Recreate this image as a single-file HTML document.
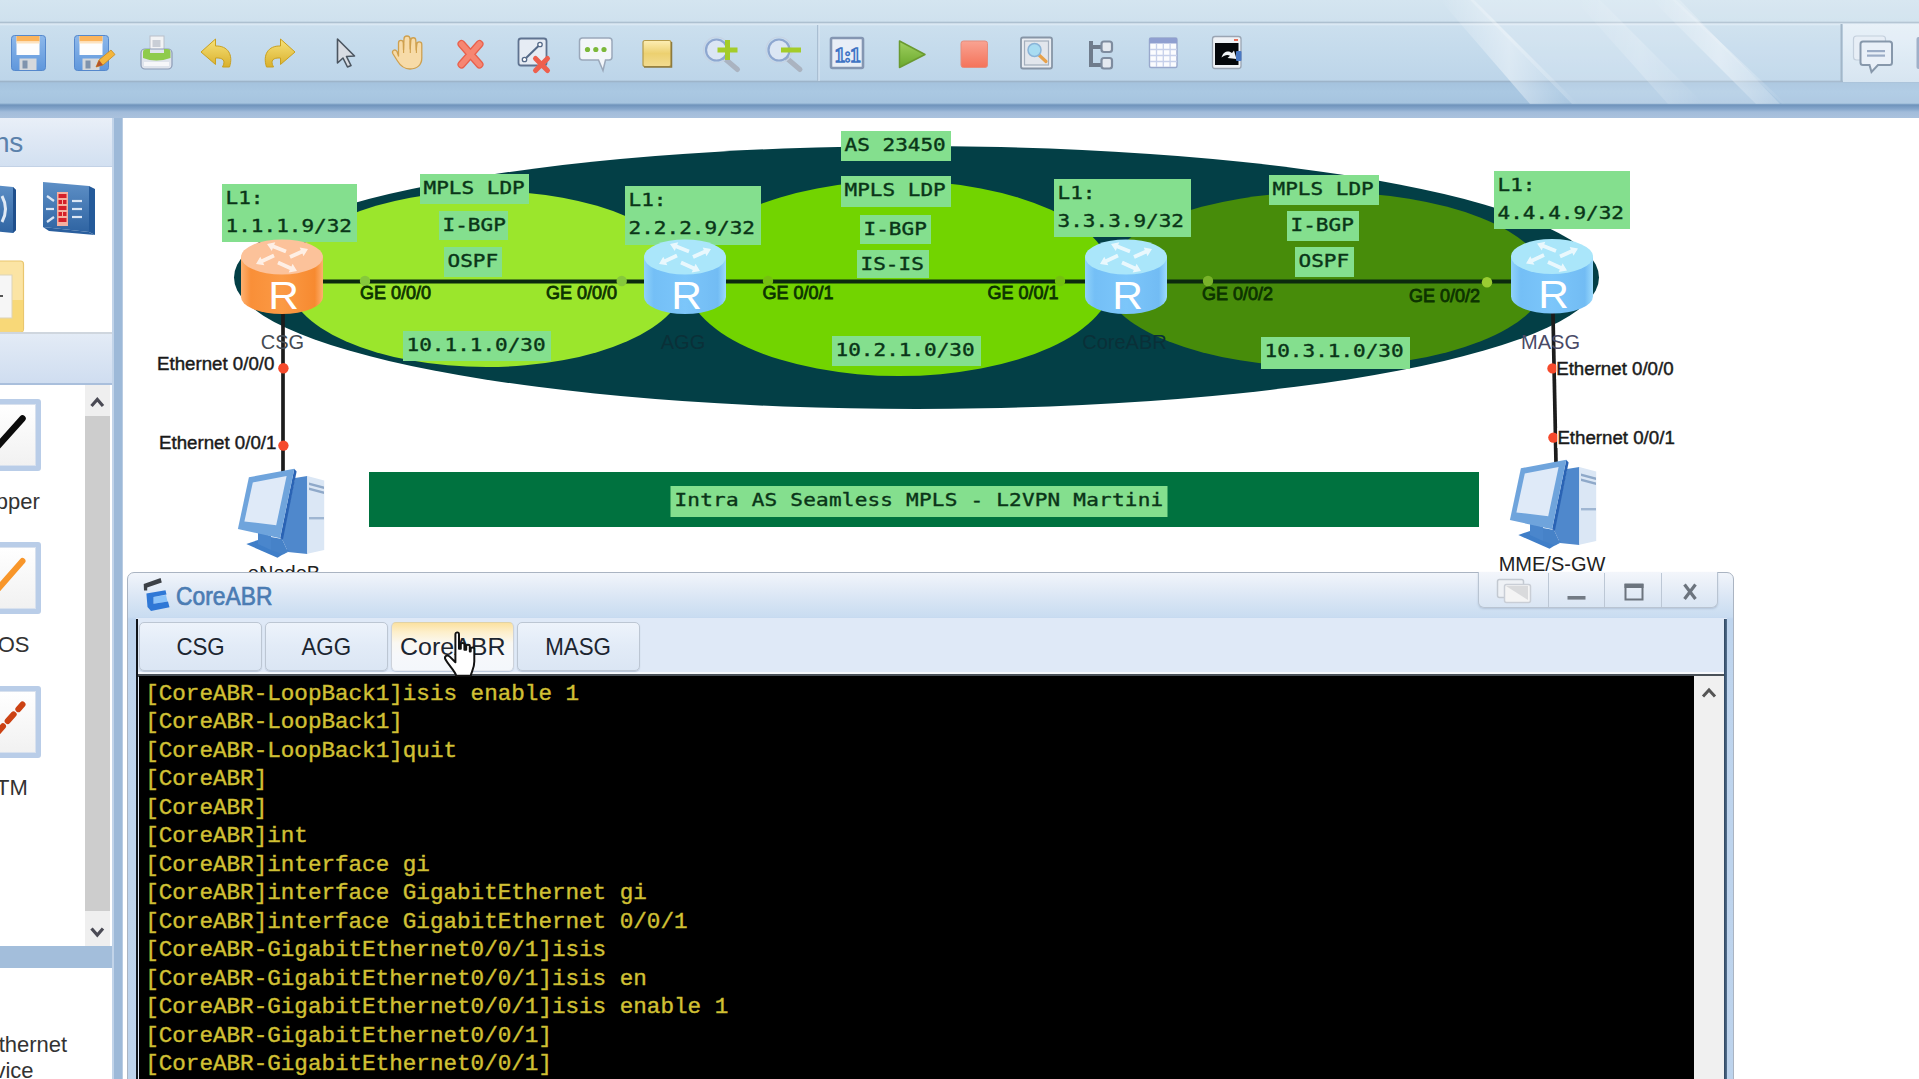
<!DOCTYPE html>
<html>
<head>
<meta charset="utf-8">
<title>eNSP</title>
<style>
html,body{margin:0;padding:0;}
body{width:1919px;height:1079px;overflow:hidden;position:relative;background:#fff;font-family:"Liberation Sans",sans-serif;}
.abs{position:absolute;}
#topbg{left:0;top:0;width:1919px;height:118px;background:linear-gradient(to bottom,#d4e5f0 0px,#cfe1ee 21px,#adc0d0 22.5px,#e0ecf5 24px,#cbdfee 26px,#c2d9eb 60px,#bdd5e9 80px,#9db4c9 81.5px,#a5c3de 83px,#aac8e2 92px,#a6c4df 103px,#6f93bb 105px,#86a7cc 109px,#a2bcda 112px,#a9c1dd 117px,#a9c1dd 118px);}
#topright{left:1843px;top:24px;width:76px;height:58px;background:linear-gradient(to bottom,#e6f0f8,#d3e3f0);}
#leftpanel{left:0;top:118px;width:112px;height:961px;background:#fff;}
#leftsep{left:112px;top:118px;width:11px;height:961px;background:linear-gradient(to right,#c2d4e9 0px,#c2d4e9 2px,#9db9d8 2px,#9db9d8 10px,#b9cce2 10px);}

.tab{top:622px;height:49px;box-sizing:border-box;border:1px solid #bcc6d3;border-radius:5px;background:linear-gradient(to bottom,#edf3fb,#e2ebf7 50%,#dbe6f4);font-size:24.5px;line-height:48px;text-align:center;color:#1c2530;box-shadow:0 1px 1px rgba(150,165,190,.5);}
.tab.act{background:linear-gradient(to bottom,#fbe1a0 0px,#fdefcb 9px,#faf8f2 20px,#f6f8fb 32px,#f4f7fb);border-color:#e0d2a6 #cdd2da #e6e9ee #cdd2da;}
.tab span{display:inline-block;transform:scaleX(0.91);}
.tab.act span{transform:scaleX(1.02);}
#tt{left:145.2px;top:679.5px;margin:0;font-family:"Liberation Mono",monospace;font-size:22.6px;line-height:28.52px;color:#d4c436;-webkit-text-stroke:0.45px #c4b42e;}

.ibox{left:-10px;width:50.500px;height:72px;box-sizing:border-box;border:5px solid #b9cde8;border-radius:3px;background:linear-gradient(to bottom,#ffffff,#f1f1f1);box-shadow:inset 0 0 0 1px #d8e1ee;}
.ltxt{font-size:22px;line-height:26px;color:#333;white-space:nowrap;}
</style>
</head>
<body>
<div id="topbg" class="abs"></div>
<div id="topright" class="abs"></div>
<div id="leftpanel" class="abs"></div>
<div id="leftsep" class="abs"></div>
<!--TOOLBAR_START-->
<svg class="abs" style="left:0;top:0" width="1919" height="118" viewBox="0 0 1919 118">
<defs>
<linearGradient id="tg_save" x1="0" y1="0" x2="0" y2="1"><stop offset="0" stop-color="#8db8ea"/><stop offset="1" stop-color="#5f97dc"/></linearGradient>
<linearGradient id="tg_yel" x1="0" y1="0" x2="0" y2="1"><stop offset="0" stop-color="#f7e27a"/><stop offset="1" stop-color="#d9b02c"/></linearGradient>
<linearGradient id="tg_rect" x1="0" y1="0" x2="0" y2="1"><stop offset="0" stop-color="#fdeeb4"/><stop offset="0.5" stop-color="#ecd070"/><stop offset="1" stop-color="#f3dc90"/></linearGradient>
<linearGradient id="tg_stop" x1="0" y1="0" x2="0" y2="1"><stop offset="0" stop-color="#f9a392"/><stop offset="1" stop-color="#f4735a"/></linearGradient>
<linearGradient id="tg_play" x1="0" y1="0" x2="0" y2="1"><stop offset="0" stop-color="#9fd060"/><stop offset="1" stop-color="#6aa82c"/></linearGradient>
<linearGradient id="streak" x1="0" y1="0" x2="1" y2="0"><stop offset="0" stop-color="#fff" stop-opacity="0"/><stop offset="0.5" stop-color="#fff" stop-opacity="0.45"/><stop offset="1" stop-color="#fff" stop-opacity="0"/></linearGradient>
<g id="floppy">
<rect x="0" y="0" width="34" height="35" rx="3" fill="url(#tg_save)" stroke="#5588cc" stroke-width="1"/>
<rect x="5" y="0.5" width="23" height="19" fill="#fdfdfd"/>
<rect x="5" y="0.5" width="23" height="5.5" fill="#fbb45c"/>
<rect x="5" y="6" width="23" height="2" fill="#fde3c0"/>
<rect x="8" y="23" width="17" height="11.5" fill="#d5d8dc"/>
<rect x="11" y="25" width="5" height="8" fill="#7f93ad"/>
</g>
</defs>
<!-- glossy streaks -->
<polygon points="1470,0 1680,0 1780,104 1572,104" fill="#fff" opacity="0.2"/>
<polygon points="1672,0 1919,0 1919,104 1782,104" fill="#fff" opacity="0.1"/>
<polygon points="1440,0 1474,0 1578,104 1530,104" fill="url(#streak)" opacity="0.95"/>
<polygon points="1575,0 1600,0 1704,104 1668,104" fill="url(#streak)" opacity="0.45"/>
<polygon points="1652,0 1676,0 1786,104 1756,104" fill="url(#streak)" opacity="0.85"/>
<!-- save -->
<use href="#floppy" x="11.5" y="35.5"/>
<!-- save as -->
<use href="#floppy" x="74.5" y="35.5"/>
<path d="M96 67 L99 60 L111 50 L115 54.5 L103 65 Z" fill="#f4b63c" stroke="#c98a20" stroke-width="0.8"/>
<path d="M96 67 L99 60 L103 65 Z" fill="#b5532a"/>
<!-- print -->
<rect x="150" y="36" width="14" height="17" fill="#f2f3f5" stroke="#b9c0ca" stroke-width="1"/>
<rect x="152.500" y="40" width="8" height="7" fill="#c9ced6"/>
<rect x="141" y="49" width="31" height="20" rx="4" fill="#dfe4ec" stroke="#8c9bb5" stroke-width="1.2"/>
<path d="M143 52 Q143 49 147 49 L150 49 L150 53 L164 53 L164 49 L167 49 Q170.500 49 170.500 52 L170.500 58 Q156 63 143 58 Z" fill="#8fcb4b"/>
<rect x="144" y="62" width="25" height="4" fill="#f6f7f9"/>
<!-- undo -->
<path d="M201 52 L215.5 39 L215.5 46 C228 45.5 233.5 55 229.5 67 L222.5 67 C226 60.5 223 57.5 215.5 58 L215.5 64.5 Z" fill="url(#tg_yel)" stroke="#c9a020" stroke-width="1"/>
<!-- redo -->
<path d="M295 52 L280.5 39 L280.5 46 C268 45.5 262.5 55 266.5 67 L273.5 67 C270 60.5 273 57.5 280.5 58 L280.5 64.5 Z" fill="url(#tg_yel)" stroke="#c9a020" stroke-width="1"/>
<!-- pointer -->
<path d="M337.500 39 L337.500 63 L343 58 L347.500 67 L351 65.500 L346.500 56.500 L354.500 56 Z" fill="#d9dde3" stroke="#4b5560" stroke-width="1.6" stroke-linejoin="round"/>
<!-- hand -->
<path d="M398.5 56 L398.5 43 C398.5 39.5 403.3 39.5 403.3 43 L403.5 50 L404 39 C404 35 410 35 410 39 L410.2 49 L410.8 40.5 C410.8 36.8 415.8 36.8 415.8 40.5 L416.2 50 L416.8 44.5 C416.8 41 421.8 41 421.8 44.5 L421.8 58 C421.8 65 417 69 410 69 C403.5 69 400.5 66 397.5 61 L392.8 53.5 C391.5 50.5 395 48.5 397 51.5 Z" fill="#f7dba8" stroke="#cfa04e" stroke-width="1.3" stroke-linejoin="round"/>
<path d="M403.6 44 L403.6 53 M410.3 41 L410.3 53 M416.4 43 L416.4 53" stroke="#cfa04e" stroke-width="1.1" fill="none"/>
<!-- red x -->
<path d="M461.500 44 L479.500 64.500 M479.500 44 L461.500 64.500" stroke="#e8604c" stroke-width="8" stroke-linecap="round"/><path d="M461.500 44 L479.500 64.500 M479.500 44 L461.500 64.500" stroke="#f68672" stroke-width="5.5" stroke-linecap="round"/>
<!-- link delete -->
<rect x="518.500" y="38.500" width="28" height="27" rx="2.500" fill="#e6ecf4" stroke="#5f7390" stroke-width="1.8"/>
<path d="M524.500 59.500 L540 44.500" stroke="#556a88" stroke-width="2"/>
<circle cx="524.500" cy="59.500" r="2.200" fill="#fff" stroke="#556a88" stroke-width="1.300"/>
<circle cx="540" cy="44.500" r="2.200" fill="#fff" stroke="#556a88" stroke-width="1.300"/>
<path d="M535.500 58.500 L547.500 70.500 M547.500 58.500 L535.500 70.500" stroke="#ee5f4c" stroke-width="5" stroke-linecap="round"/>
<!-- bubble -->
<path d="M582.500 38 L609 38 Q612 38 612 41 L612 57 Q612 60 609 60 L605.500 60 L603 70.500 L598.500 60 L582.500 60 Q579.500 60 579.500 57 L579.500 41 Q579.500 38 582.500 38 Z" fill="#f3f6fa" stroke="#9aa8ba" stroke-width="1.5"/>
<circle cx="587.500" cy="49.500" r="2.600" fill="#7cb83a"/><circle cx="595.800" cy="49.500" r="2.600" fill="#7cb83a"/><circle cx="604" cy="49.500" r="2.600" fill="#7cb83a"/>
<!-- rect -->
<rect x="643" y="40.500" width="28" height="26" rx="2" fill="url(#tg_rect)" stroke="#b59a48" stroke-width="1.2"/>
<path d="M644 67 L671.500 67 L671.500 42" fill="none" stroke="#8d7a3c" stroke-width="1.5"/>
<!-- zoom in -->
<path d="M724 58 L737.500 69.500" stroke="#aab3c0" stroke-width="5" stroke-linecap="round"/>
<circle cx="716.500" cy="50" r="10.500" fill="#dbe6f4" stroke="#8ea7d0" stroke-width="2.200"/>
<circle cx="716.500" cy="50" r="13" fill="none" stroke="#c6d3e4" stroke-width="1.200"/>
<path d="M717.500 50 L737.500 50 M727.500 40 L727.500 60" stroke="#a4cc2a" stroke-width="5"/>
<!-- zoom out -->
<path d="M786.500 58 L800 69.500" stroke="#aab3c0" stroke-width="5" stroke-linecap="round"/>
<circle cx="779" cy="50" r="10.500" fill="#dbe6f4" stroke="#8ea7d0" stroke-width="2.200"/>
<circle cx="779" cy="50" r="13" fill="none" stroke="#c6d3e4" stroke-width="1.200"/>
<path d="M781 50 L801 50" stroke="#a4cc2a" stroke-width="5"/>
<!-- separator -->
<rect x="817" y="25" width="1.500" height="56" fill="#a9bed2"/>
<rect x="818.500" y="25" width="1" height="56" fill="#dbe8f3"/>
<!-- 1:1 -->
<rect x="831" y="38" width="32" height="30" rx="1.500" fill="#e8eef7" stroke="#8496b2" stroke-width="2.600"/>
<text x="847" y="62" font-family="Liberation Serif,serif" font-weight="bold" font-size="22" fill="#d2e4f8" stroke="#3f73c4" stroke-width="1.500" text-anchor="middle" letter-spacing="-1.5">1:1</text>
<!-- play -->
<path d="M899.500 41 L925 54.500 L899.500 67.500 Z" fill="url(#tg_play)" stroke="#6a9a30" stroke-width="1.500" stroke-linejoin="round"/>
<!-- stop -->
<rect x="961" y="41" width="26.500" height="26.500" rx="2.500" fill="url(#tg_stop)" stroke="#e58c7c" stroke-width="1"/>
<!-- capture -->
<rect x="1021" y="37.500" width="31" height="31" rx="2" fill="#e9edf2" stroke="#8795a6" stroke-width="1.800"/>
<rect x="1024.500" y="41" width="24" height="24" fill="#e2e6ec" stroke="#a4afbd" stroke-width="1.200"/>
<path d="M1039 55 L1046 61.500" stroke="#e7a14a" stroke-width="3.200" stroke-linecap="round"/>
<circle cx="1034.500" cy="50" r="6.500" fill="#a8dcf2" stroke="#8ab4d8" stroke-width="1.500"/>
<!-- tree -->
<path d="M1091 41 L1091 65 L1101 65 M1091 47 L1101 47" fill="none" stroke="#6f7c8c" stroke-width="4"/>
<rect x="1101.500" y="41.500" width="10.500" height="10.500" rx="2.500" fill="#e4e9f0" stroke="#7e8c9f" stroke-width="2.200"/>
<rect x="1101.500" y="58" width="10.500" height="10.500" rx="2.500" fill="#e4e9f0" stroke="#7e8c9f" stroke-width="2.200"/>
<!-- table -->
<rect x="1149.500" y="38" width="27.500" height="29.500" rx="1.500" fill="#fbfcfe" stroke="#99a9cc" stroke-width="1.400"/>
<rect x="1149.500" y="38" width="27.500" height="5.500" fill="#8f9fd0"/>
<path d="M1156.500 43.500 V67 M1163.300 43.500 V67 M1170.100 43.500 V67 M1150 49.500 H1177 M1150 55.500 H1177 M1150 61.500 H1177" stroke="#c6d0ea" stroke-width="1.300"/>
<!-- console -->
<rect x="1212.500" y="36.500" width="28.500" height="32" rx="2.500" fill="#eef1f5" stroke="#9aa5b3" stroke-width="1.300"/>
<rect x="1215" y="43" width="23.500" height="22" fill="#05070a"/>
<rect x="1234" y="39" width="4" height="2" fill="#e9705a"/>
<path d="M1221.500 57.500 C1223 51 1229 50 1232 53 L1234 50.500 L1236.500 59 L1227.500 58 L1230 55.800 C1227.500 54 1224.500 55 1221.500 57.500 Z" fill="#f2f4f7"/>
<rect x="1236" y="51" width="5.500" height="10" rx="1" fill="#4a78c2"/>
<!-- right separator + chat -->
<rect x="1840.500" y="24" width="2" height="58" fill="#a2b6c8"/>
<rect x="1853.500" y="36" width="32" height="24" rx="3" fill="#e7eef6" stroke="#c3cfdc" stroke-width="1.200"/>
<path d="M1863 41.500 L1889.500 41.500 Q1892 41.500 1892 44 L1892 62.500 Q1892 65 1889.500 65 L1878 65 L1871.500 72 L1869.500 65 L1863 65 Q1860.500 65 1860.500 62.500 L1860.500 44 Q1860.500 41.500 1863 41.500 Z" fill="#e9f0f8" stroke="#8798ab" stroke-width="2"/>
<rect x="1867" y="50" width="18" height="2.200" fill="#9bacc6"/><rect x="1867" y="54.500" width="18" height="2.200" fill="#9bacc6"/>
<rect x="1916.500" y="37" width="6" height="32" rx="2" fill="#9fb0c8"/>
</svg>

<!--TOOLBAR_END-->
<!--LEFT_START-->
<div class="abs" style="left:0;top:118px;width:112px;height:49px;background:linear-gradient(to bottom,#e9eff8,#dde7f4 50%,#d2e0f1);"></div>
<div class="abs" style="left:0;top:166px;width:112px;height:1px;background:#c3d2e6;"></div>
<div class="abs" style="left:-21px;top:127px;font-size:28px;line-height:32px;color:#5b81ab;letter-spacing:-0.5px;">ons</div>
<svg class="abs" style="left:0;top:170px" width="112" height="166" viewBox="0 170 112 166">
<defs><linearGradient id="lg_b" x1="0" y1="0" x2="0" y2="1"><stop offset="0" stop-color="#5d8fc6"/><stop offset="1" stop-color="#2f64a2"/></linearGradient></defs>
<!-- partial icon -->
<path d="M-20 184 L13 187 L16 190 L16 230 L13 233 L-20 230 Z" fill="url(#lg_b)"/>
<path d="M13 187 L16 190 L16 230 L13 233 Z" fill="#1f4f8c"/>
<path d="M2 196 Q9 209 2 222" fill="none" stroke="#dfe9f5" stroke-width="3"/>
<!-- firewall icon -->
<path d="M43 182 L89 186 L89 232 L43 227 Z" fill="url(#lg_b)"/>
<path d="M89 186 L95 189 L95 235 L89 232 Z" fill="#245a9a"/>
<path d="M43 227 L89 232 L95 235 L49 231 Z" fill="#2a5f9e"/>
<rect x="57" y="192" width="11" height="34" fill="#f4b0a0"/>
<g fill="#d5202a"><rect x="58.500" y="194" width="8" height="4"/><rect x="58.500" y="200" width="3.500" height="4"/><rect x="63" y="200" width="3.500" height="4"/><rect x="58.500" y="206" width="8" height="4"/><rect x="58.500" y="212" width="3.500" height="4"/><rect x="63" y="212" width="3.500" height="4"/><rect x="58.500" y="218" width="8" height="4"/></g>
<g stroke="#dbe6f4" stroke-width="2.200" fill="none"><path d="M47 196 L54 201"/><path d="M46 209 L54 209"/><path d="M47 222 L54 217"/><path d="M72 201 L82 201"/><path d="M72 209 L82 209"/><path d="M72 217 L82 217"/></g>
<!-- selected yellow -->
<rect x="-10" y="261" width="33.500" height="71" rx="3" fill="#fbe4a4" stroke="#e9c66e" stroke-width="1.200"/>
<rect x="-10" y="300" width="33" height="31.500" fill="#f8d878"/>
<rect x="-10" y="275" width="22" height="43" fill="#f6f6f6" stroke="#dcd3b8" stroke-width="1"/>
<rect x="0" y="295" width="3" height="2" fill="#555"/>
</svg>
<div class="abs" style="left:0;top:332px;width:112px;height:2px;background:#cfd6de;"></div>
<div class="abs" style="left:0;top:334px;width:112px;height:50px;background:linear-gradient(to bottom,#e3ebf6,#d9e4f3 50%,#cfddf0);"></div>
<div class="abs" style="left:0;top:383px;width:112px;height:2px;background:#a9bfdc;"></div>
<div class="abs" style="left:-6px;top:345px;font-size:20px;color:#5b81ab;">:</div>
<!-- scrollbar -->
<div class="abs" style="left:85px;top:385px;width:25px;height:561px;background:#efefef;"></div>
<div class="abs" style="left:85px;top:416px;width:25px;height:494.500px;background:#cdcdcd;"></div>
<svg class="abs" style="left:85px;top:392px" width="25" height="20" viewBox="0 0 25 20"><path d="M6.500 14 L12.300 7.500 L18 14" fill="none" stroke="#4b4b55" stroke-width="3.200"/></svg>
<svg class="abs" style="left:85px;top:922px" width="25" height="20" viewBox="0 0 25 20"><path d="M6.500 6.500 L12.300 13 L18 6.500" fill="none" stroke="#4b4b55" stroke-width="3.200"/></svg>
<!-- icon boxes -->
<div class="ibox abs" style="top:399px;"></div>
<div class="ibox abs" style="top:542px;"></div>
<div class="ibox abs" style="top:686px;"></div>
<svg class="abs" style="left:0;top:399px" width="42" height="360" viewBox="0 399 42 360">
<path d="M-3 447 L22.500 418.500" stroke="#0c0c0c" stroke-width="6.500" stroke-linecap="round"/>
<path d="M-3 590 L22.500 561" stroke="#f8962a" stroke-width="6" stroke-linecap="round"/>
<path d="M-3 733 L22.500 704.500" stroke="#cc4214" stroke-width="6" stroke-linecap="round" stroke-dasharray="9 7"/>
</svg>
<div class="abs ltxt" style="left:-16.500px;top:489px;">opper</div>
<div class="abs ltxt" style="left:-17px;top:632px;">POS</div>
<div class="abs ltxt" style="left:-17px;top:775px;">ATM</div>
<!-- bottom -->
<div class="abs" style="left:0;top:946px;width:112px;height:22px;background:#a3bedb;"></div>
<div class="abs ltxt" style="left:-16px;top:1032px;">Ethernet</div>
<div class="abs ltxt" style="left:-30px;top:1058px;">device</div>

<!--LEFT_END-->
<!--DIAGRAM_START-->
<svg class="abs" style="left:0;top:0" width="1919" height="1079" viewBox="0 0 1919 1079">
<defs>
<linearGradient id="gb" x1="0" x2="1" y1="0" y2="0"><stop offset="0" stop-color="#8fd2fa"/><stop offset="0.12" stop-color="#74bff6"/><stop offset="0.5" stop-color="#7cc6fa"/><stop offset="0.9" stop-color="#72bcf4"/><stop offset="1" stop-color="#9bdafc"/></linearGradient>
<linearGradient id="go" x1="0" x2="1" y1="0" y2="0"><stop offset="0" stop-color="#fdb070"/><stop offset="0.12" stop-color="#f98f38"/><stop offset="0.5" stop-color="#fb9a45"/><stop offset="0.9" stop-color="#f78a30"/><stop offset="1" stop-color="#fdb070"/></linearGradient>
<g id="arrows" fill="#ffffff" opacity="0.75">
<polygon points="46.7,10.7 34.2,5.8 35.3,3.2 27.0,5.0 31.8,12.0 32.8,9.3 45.3,14.3"/>
<polygon points="50.8,19.7 62.4,14.6 63.5,17.2 68.0,10.0 59.7,8.5 60.8,11.1 49.2,16.3"/>
<polygon points="33.2,14.8 21.5,20.3 20.3,17.7 16.0,25.0 24.4,26.3 23.1,23.7 34.8,18.2"/>
<polygon points="37.2,25.2 49.8,30.9 48.7,33.5 57.0,32.0 52.6,24.8 51.4,27.4 38.8,21.8"/>
</g>
<g id="rblue">
<path d="M1 18 L1 58 A41 17 0 0 0 83 58 L83 18 Z" fill="url(#gb)"/>
<ellipse cx="42" cy="18" rx="41" ry="17.5" fill="#aae6fa"/>
<use href="#arrows"/>
<text transform="translate(43.5,69.7) scale(1.12,1)" font-family="Liberation Sans,sans-serif" font-size="38" fill="#fff" text-anchor="middle">R</text>
</g>
<g id="rorange">
<path d="M1 18 L1 58 A41 17 0 0 0 83 58 L83 18 Z" fill="url(#go)"/>
<ellipse cx="42" cy="18" rx="41" ry="17.5" fill="#fcc29a"/>
<use href="#arrows"/>
<text transform="translate(43.5,69.7) scale(1.12,1)" font-family="Liberation Sans,sans-serif" font-size="38" fill="#fff" text-anchor="middle">R</text>
</g>
<g id="pc">
<polygon points="59,12 71.3,10 71.3,88 52,86 46,73" fill="#4f88cc"/>
<polygon points="71.3,10 88.2,14.5 88.2,84 71.3,87.8" fill="#dbe7f5"/>
<rect x="73" y="16.5" width="15" height="2.4" fill="#8fa9c9" transform="skewY(15) translate(0,-19.5)"/>
<rect x="73" y="21.5" width="15" height="2.4" fill="#8fa9c9" transform="skewY(15) translate(0,-19.5)"/>
<rect x="73" y="51" width="15" height="2.4" fill="#9fb6d2"/>
<polygon points="10.3,78 22,74 53,84.6 41.5,91.7" fill="#3f7ec8"/>
<polygon points="22,66 35,70 35,84 22,78" fill="#4a86cc"/>
<polygon points="35,71 46,73 52,86 47,88.5 35,84" fill="#4682c8"/>
<polygon points="58.3,2.8 60.6,5.4 46.9,73.8 44.1,72.2" fill="#2a63b4"/>
<polygon points="12.9,11.2 58.3,2.8 44.1,72.2 1.9,63.1" fill="#6fa4dc"/>
<polygon points="16.8,16.4 50.6,10 40.2,59.3 8.4,55.4" fill="#dfeaf8"/>
</g>
</defs>
<ellipse cx="916.5" cy="277.5" rx="682.5" ry="131.5" fill="#033f46"/>
<ellipse cx="486.5" cy="279" rx="199" ry="88" fill="#9be62c"/>
<ellipse cx="1324.5" cy="279.5" rx="221" ry="87.5" fill="#478c0a"/>
<ellipse cx="899" cy="278.5" rx="214" ry="97.5" fill="#72d400"/>
<rect x="369" y="472" width="1110" height="55" fill="#00723f"/>
<g stroke="#0b2a0e" stroke-width="4"><line x1="320" y1="281.5" x2="646" y2="281.5"/><line x1="724" y1="281.5" x2="1086" y2="281.5"/><line x1="1165" y1="281.5" x2="1512" y2="281.5"/></g>
<g stroke="#1c1c1c" stroke-width="3.7"><line x1="283" y1="310" x2="283" y2="472"/><line x1="1552.9" y1="310" x2="1556" y2="463"/></g>
<circle cx="365" cy="281" r="5.2" fill="#86c83c"/>
<circle cx="621.7" cy="281" r="5.2" fill="#86c83c"/>
<circle cx="768" cy="281" r="5.2" fill="#74c010"/>
<circle cx="1060" cy="281" r="5.2" fill="#74c010"/>
<circle cx="1208" cy="281" r="5.2" fill="#79b32a"/>
<circle cx="1487" cy="282.3" r="5.2" fill="#9acd32"/>
<rect x="222" y="184" width="135" height="58" fill="#84df8e"/>
<rect x="420" y="174" width="109" height="30" fill="#84df8e"/>
<rect x="439" y="211" width="69" height="29" fill="#84df8e"/>
<rect x="444" y="247" width="58" height="30" fill="#84df8e"/>
<rect x="403" y="331" width="148" height="30" fill="#84df8e"/>
<rect x="625" y="186" width="136" height="59" fill="#84df8e"/>
<rect x="841" y="131" width="110" height="30" fill="#84df8e"/>
<rect x="841" y="176" width="110" height="31" fill="#84df8e"/>
<rect x="860" y="215" width="71" height="29" fill="#84df8e"/>
<rect x="857" y="250" width="72" height="28" fill="#84df8e"/>
<rect x="832" y="336" width="149" height="30" fill="#84df8e"/>
<rect x="1054" y="179" width="137" height="58" fill="#84df8e"/>
<rect x="1269" y="175" width="110" height="30" fill="#84df8e"/>
<rect x="1287" y="211" width="72" height="30" fill="#84df8e"/>
<rect x="1295" y="247" width="59" height="30" fill="#84df8e"/>
<rect x="1261" y="337" width="149" height="32" fill="#84df8e"/>
<rect x="1494" y="171" width="136" height="58" fill="#84df8e"/>
<rect x="670.5" y="486" width="497.0" height="31" fill="#84df8e"/>
<g font-family="DejaVu Sans Mono,Liberation Mono,monospace" font-size="21" fill="#0a3518" stroke="#0a3518" stroke-width="0.45">
<text transform="translate(225.6,203.5) scale(1,0.87)" xml:space="preserve">L1:</text>
<text transform="translate(225.6,232.0) scale(1,0.87)" xml:space="preserve">1.1.1.9/32</text>
<text transform="translate(423.6,193.5) scale(1,0.87)" xml:space="preserve">MPLS LDP</text>
<text transform="translate(442.6,230.5) scale(1,0.87)" xml:space="preserve">I-BGP</text>
<text transform="translate(447.6,266.5) scale(1,0.87)" xml:space="preserve">OSPF</text>
<text transform="translate(406.6,350.5) scale(1,0.87)" xml:space="preserve">10.1.1.0/30</text>
<text transform="translate(628.6,205.5) scale(1,0.87)" xml:space="preserve">L1:</text>
<text transform="translate(628.6,234.0) scale(1,0.87)" xml:space="preserve">2.2.2.9/32</text>
<text transform="translate(844.6,150.5) scale(1,0.87)" xml:space="preserve">AS 23450</text>
<text transform="translate(844.6,195.5) scale(1,0.87)" xml:space="preserve">MPLS LDP</text>
<text transform="translate(863.6,234.5) scale(1,0.87)" xml:space="preserve">I-BGP</text>
<text transform="translate(860.6,269.5) scale(1,0.87)" xml:space="preserve">IS-IS</text>
<text transform="translate(835.6,355.5) scale(1,0.87)" xml:space="preserve">10.2.1.0/30</text>
<text transform="translate(1057.6,198.5) scale(1,0.87)" xml:space="preserve">L1:</text>
<text transform="translate(1057.6,227.0) scale(1,0.87)" xml:space="preserve">3.3.3.9/32</text>
<text transform="translate(1272.6,194.5) scale(1,0.87)" xml:space="preserve">MPLS LDP</text>
<text transform="translate(1290.6,230.5) scale(1,0.87)" xml:space="preserve">I-BGP</text>
<text transform="translate(1298.6,266.5) scale(1,0.87)" xml:space="preserve">OSPF</text>
<text transform="translate(1264.6,356.5) scale(1,0.87)" xml:space="preserve">10.3.1.0/30</text>
<text transform="translate(1497.6,190.5) scale(1,0.87)" xml:space="preserve">L1:</text>
<text transform="translate(1497.6,219.0) scale(1,0.87)" xml:space="preserve">4.4.4.9/32</text>
<text transform="translate(674.5,505.5) scale(1,0.87)" xml:space="preserve" letter-spacing="0.23">Intra AS Seamless MPLS - L2VPN Martini</text>
</g>
<use href="#rorange" x="240" y="239"/>
<use href="#rblue" x="643" y="239"/>
<use href="#rblue" x="1084" y="239"/>
<use href="#rblue" x="1510" y="238.5"/>
<g font-family="Liberation Sans,sans-serif" font-size="20" text-anchor="middle">
<text x="282.5" y="348.5" fill="#454b52">CSG</text>
<text x="683" y="348.5" fill="#0a3038">AGG</text>
<text x="1124.5" y="348.5" fill="#0a3038">CoreABR</text>
<text x="1550.5" y="348.5" fill="#4a4a66">MASG</text>
</g>
<g font-family="Liberation Sans,sans-serif" font-size="18" fill="#0c3300" stroke="#0c3300" stroke-width="0.8">
<text x="360" y="299">GE 0/0/0</text>
<text x="546" y="299">GE 0/0/0</text>
<text x="762.5" y="299">GE 0/0/1</text>
<text x="987.5" y="299">GE 0/0/1</text>
<text x="1202" y="299.5">GE 0/0/2</text>
<text x="1409" y="301.5">GE 0/0/2</text>
</g>
<circle cx="283.4" cy="368.2" r="5.2" fill="#f64a2c"/>
<circle cx="283.4" cy="445.6" r="5.2" fill="#f64a2c"/>
<circle cx="1552.5" cy="368.4" r="5.2" fill="#f64a2c"/>
<circle cx="1553.4" cy="437.6" r="5.2" fill="#f64a2c"/>
<rect x="1556.3" y="359" width="119" height="20" fill="#fff"/><rect x="1557.3" y="428" width="118" height="20" fill="#fff"/>
<g font-family="Liberation Sans,sans-serif" font-size="18.7" fill="#1a1a1a" stroke="#1a1a1a" stroke-width="0.45">
<text x="157" y="370">Ethernet 0/0/0</text>
<text x="159" y="449.3">Ethernet 0/0/1</text>
<text x="1556.2" y="375.2">Ethernet 0/0/0</text>
<text x="1557.4" y="444.3">Ethernet 0/0/1</text>
</g>
<use href="#pc" x="236" y="466"/>
<use href="#pc" x="1508" y="457"/>
<g font-family="Liberation Sans,sans-serif" font-size="20" fill="#222" text-anchor="middle"><text x="284" y="580">eNodeB</text><text x="1552" y="571.3">MME/S-GW</text></g>
</svg>
<!--DIAGRAM_END-->
<!--TERMINAL_START-->
<div id="win" class="abs" style="left:127px;top:572px;width:1607px;height:520px;border:1px solid #aab4c2;border-radius:7px 7px 0 0;box-sizing:border-box;background:linear-gradient(to bottom,#f1f5fb 0px,#e4ecf7 14px,#d3e2f3 32px,#c9dcf1 44px,#bfd5ee 46px,#bdd3ec 100%);"></div>
<div class="abs" style="left:136px;top:618px;width:1591px;height:470px;background:#dfe9f7;"></div>
<div class="abs" style="left:136px;top:619px;width:2px;height:470px;background:#10151c;"></div>
<div class="abs" style="left:1724px;top:619px;width:3px;height:470px;background:linear-gradient(to right,#2d4560,#55718f);"></div>
<div class="abs" style="left:138px;top:672px;width:1586px;height:2px;background:#f7f9fc;"></div>
<div class="abs" style="left:138px;top:674px;width:1586px;height:2.5px;background:#4a5158;"></div>
<div class="abs" style="left:138.5px;top:676.3px;width:1555.5px;height:410px;background:#000;"></div>
<div class="abs" style="left:1694px;top:676.3px;width:30px;height:410px;background:#f0f0f0;"></div>
<svg class="abs" style="left:1698px;top:684px" width="22" height="18" viewBox="0 0 22 18"><path d="M5 12.5 L11 6 L17 12.5" fill="none" stroke="#555" stroke-width="3"/></svg>
<!-- title -->
<svg class="abs" style="left:142px;top:577px" width="30" height="36" viewBox="0 0 30 36">
<path d="M1.7 7 L18.6 1 L19.8 5.6 L5.2 10.4 L5.2 13.6 L2 13.6 Z" fill="#3c4046"/>
<path d="M11.5 20 L24 18 L25.5 24.5 L11.5 26.8 Z" fill="#8cc4fa"/>
<path d="M4.4 16.4 L23.5 13.2 L24.5 17.6 L11.5 20 L11.5 26.8 L26 24.6 L27.5 30.3 L9 34 L5.5 30 Z" fill="#2f78d6"/>
</svg>
<div class="abs" style="left:176px;top:581.3px;font-size:25.5px;line-height:30px;color:#4b7cb3;transform:scaleX(0.895);transform-origin:0 0;white-space:nowrap;-webkit-text-stroke:0.7px #4b7cb3;"><span>CoreABR</span></div>
<!-- window buttons -->
<div class="abs" style="left:1478px;top:572px;width:240px;height:36px;border:1px solid #b9c4d2;border-top:none;border-radius:0 0 6px 6px;box-sizing:border-box;background:linear-gradient(to bottom,#f3f6fb,#e3ebf6 60%,#d9e5f3);box-shadow:0 1px 2px rgba(120,140,170,.35);"></div>
<div class="abs" style="left:1548px;top:573px;width:1px;height:34px;background:#bcc7d5;"></div>
<div class="abs" style="left:1604px;top:573px;width:1px;height:34px;background:#bcc7d5;"></div>
<div class="abs" style="left:1661px;top:573px;width:1px;height:34px;background:#bcc7d5;"></div>
<svg class="abs" style="left:1478px;top:572px" width="240" height="36" viewBox="0 0 240 36">
<rect x="19.5" y="7.5" width="26" height="18" rx="2" fill="#eef1f5" stroke="#c3c9d1" stroke-width="1.5"/>
<rect x="26.5" y="12.5" width="26" height="18" rx="2" fill="#f4f4f4" stroke="#c9ced6" stroke-width="1.5"/>
<path d="M28 14 L50 14 L50 28 Z" fill="#d9dadc"/>
<rect x="89.5" y="24" width="18" height="3.6" fill="#727a84"/>
<rect x="147.5" y="13" width="17" height="14.5" fill="none" stroke="#6c747e" stroke-width="2"/>
<rect x="146.5" y="11.5" width="19" height="4.5" fill="#6c747e"/>
<path d="M206.5 12.5 L217.5 27 M217.5 12.5 L206.5 27" stroke="#6c747e" stroke-width="3.2" fill="none"/>
</svg>
<!-- tabs -->
<div class="tab abs" style="left:139px;width:123px;"><span>CSG</span></div>
<div class="tab abs" style="left:265px;width:123px;"><span>AGG</span></div>
<div class="tab abs act" style="left:391px;width:123px;"><span>CoreABR</span></div>
<div class="tab abs" style="left:517px;width:123px;"><span>MASG</span></div>
<!-- cursor hand -->
<svg class="abs" style="left:440.5px;top:629px" width="36" height="50.4" viewBox="0 0 40 56">
<path d="M16 6 C16 3 20 3 20 6 L20 22 L22 22 L22 17 C22 15 26 15 26 17 L26 23 L28 23 L28 19 C28 17 32 17 32 19 L32 25 L33 25 L33 22 C33 20 37 20 37 22 L37 36 C37 44 34 47 33 52 L17 52 C15 46 9 41 5 34 C3 30 7 28 10 31 L16 37 Z" fill="#fff" stroke="#111" stroke-width="2.2" stroke-linejoin="round"/>
</svg>
<!-- terminal text -->
<pre id="tt" class="abs">[CoreABR-LoopBack1]isis enable 1
[CoreABR-LoopBack1]
[CoreABR-LoopBack1]quit
[CoreABR]
[CoreABR]
[CoreABR]int
[CoreABR]interface gi
[CoreABR]interface GigabitEthernet gi
[CoreABR]interface GigabitEthernet 0/0/1
[CoreABR-GigabitEthernet0/0/1]isis
[CoreABR-GigabitEthernet0/0/1]isis en
[CoreABR-GigabitEthernet0/0/1]isis enable 1
[CoreABR-GigabitEthernet0/0/1]
[CoreABR-GigabitEthernet0/0/1]</pre>

<!--TERMINAL_END-->
</body>
</html>
